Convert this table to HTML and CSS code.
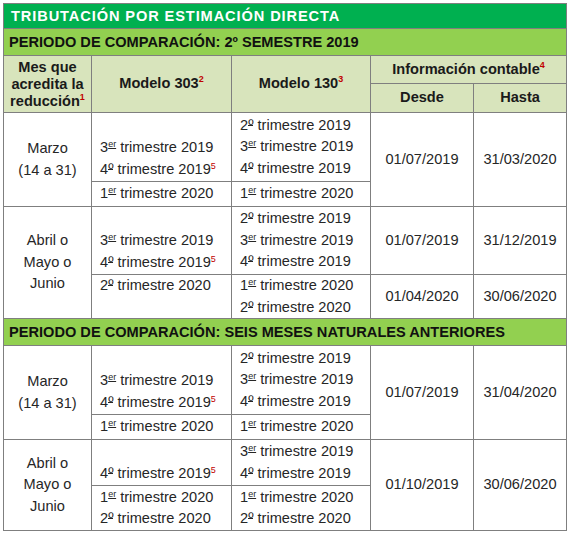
FILE: index.html
```html
<!DOCTYPE html>
<html lang="es">
<head>
<meta charset="utf-8">
<title>Tributación por estimación directa</title>
<link rel="stylesheet" href="styles.css">
</head>
<body>
<table class="tbl">
  <colgroup>
    <col class="c1"><col class="c2"><col class="c3"><col class="c4"><col class="c5">
  </colgroup>
  <tr class="r-title"><td colspan="5" class="title">TRIBUTACIÓN POR ESTIMACIÓN DIRECTA</td></tr>
  <tr class="r-sec"><td colspan="5" class="sec">PERIODO DE COMPARACIÓN: 2º SEMESTRE 2019</td></tr>
  <tr class="r-h1">
    <th rowspan="2" class="hd hmes">Mes que<br>acredita la<br>reducción<sup class="n">1</sup></th>
    <th rowspan="2" class="hd">Modelo 303<sup class="n">2</sup></th>
    <th rowspan="2" class="hd">Modelo 130<sup class="n">3</sup></th>
    <th colspan="2" class="hd">Información contable<sup class="n">4</sup></th>
  </tr>
  <tr class="r-h2"><th class="hd">Desde</th><th class="hd">Hasta</th></tr>

  <tr class="r69">
    <td rowspan="2" class="mes">Marzo<br>(14 a 31)</td>
    <td class="tx bot">3<span class="o">er</span> trimestre 2019<br>4<span class="om">º</span> trimestre 2019<sup class="f">5</sup></td>
    <td class="tx">2<span class="om">º</span> trimestre 2019<br>3<span class="o">er</span> trimestre 2019<br>4<span class="om">º</span> trimestre 2019</td>
    <td rowspan="2" class="dt">01/07/2019</td>
    <td rowspan="2" class="dt">31/03/2020</td>
  </tr>
  <tr class="r25">
    <td class="tx">1<span class="o">er</span> trimestre 2020</td>
    <td class="tx">1<span class="o">er</span> trimestre 2020</td>
  </tr>

  <tr class="r67">
    <td rowspan="2" class="mes">Abril o<br>Mayo o<br>Junio</td>
    <td class="tx bot">3<span class="o">er</span> trimestre 2019<br>4<span class="om">º</span> trimestre 2019<sup class="f">5</sup></td>
    <td class="tx">2<span class="om">º</span> trimestre 2019<br>3<span class="o">er</span> trimestre 2019<br>4<span class="om">º</span> trimestre 2019</td>
    <td class="dt">01/07/2019</td>
    <td class="dt">31/12/2019</td>
  </tr>
  <tr class="r44">
    <td class="tx top">2<span class="om">º</span> trimestre 2020</td>
    <td class="tx">1<span class="o">er</span> trimestre 2020<br>2<span class="om">º</span> trimestre 2020</td>
    <td class="dt">01/04/2020</td>
    <td class="dt">30/06/2020</td>
  </tr>

  <tr class="r-sec2"><td colspan="5" class="sec">PERIODO DE COMPARACIÓN: SEIS MESES NATURALES ANTERIORES</td></tr>

  <tr class="r69">
    <td rowspan="2" class="mes">Marzo<br>(14 a 31)</td>
    <td class="tx bot">3<span class="o">er</span> trimestre 2019<br>4<span class="om">º</span> trimestre 2019<sup class="f">5</sup></td>
    <td class="tx">2<span class="om">º</span> trimestre 2019<br>3<span class="o">er</span> trimestre 2019<br>4<span class="om">º</span> trimestre 2019</td>
    <td rowspan="2" class="dt">01/07/2019</td>
    <td rowspan="2" class="dt">31/04/2020</td>
  </tr>
  <tr class="r25">
    <td class="tx">1<span class="o">er</span> trimestre 2020</td>
    <td class="tx">1<span class="o">er</span> trimestre 2020</td>
  </tr>

  <tr class="r46">
    <td rowspan="2" class="mes">Abril o<br>Mayo o<br>Junio</td>
    <td class="tx bot">4<span class="om">º</span> trimestre 2019<sup class="f">5</sup></td>
    <td class="tx">3<span class="o">er</span> trimestre 2019<br>4<span class="om">º</span> trimestre 2019</td>
    <td rowspan="2" class="dt">01/10/2019</td>
    <td rowspan="2" class="dt">30/06/2020</td>
  </tr>
  <tr class="r46">
    <td class="tx">1<span class="o">er</span> trimestre 2020<br>2<span class="om">º</span> trimestre 2020</td>
    <td class="tx">1<span class="o">er</span> trimestre 2020<br>2<span class="om">º</span> trimestre 2020</td>
  </tr>
</table>
</body>
</html>
```

FILE: styles.css
```css
html, body {
  margin: 0;
  padding: 0;
  background: #ffffff;
}
body {
  padding: 3px 0 0 3px;
  font-family: "Liberation Sans", Arial, sans-serif;
  font-size: 14.6px;
  color: #262626;
}
.tbl {
  border-collapse: collapse;
  table-layout: fixed;
  width: 563px;
  font-size: 14.6px;
}
.c1 { width: 88px; }
.c2 { width: 140px; }
.c3 { width: 139px; }
.c4 { width: 103px; }
.c5 { width: 93px; }

.tbl td, .tbl th {
  border: 1px solid #7f7f7f;
  padding: 0 8px;
  line-height: 21.5px;
  vertical-align: middle;
}
.title {
  background: #00b050;
  color: #ffffff;
  font-weight: bold;
  height: 24px;
  letter-spacing: 0.9px;
  padding-left: 7px !important;
  line-height: 20px !important;
}
.sec {
  background: #92d050;
  color: #111111;
  font-weight: bold;
  padding-left: 5px !important;
  line-height: 20px !important;
}
.r-sec td { height: 26px; }
.r-sec2 td { height: 26px; }
.hd {
  background: #d8e4bc;
  color: #1a1a1a;
  font-weight: bold;
  text-align: center;
}
.hmes {
  line-height: 17px !important;
  padding: 2px 2px 1px !important;
}
.r-h1 th { height: 27px; }
.r-h2 th { height: 28px; }
.mes {
  text-align: center;
  padding: 0 2px !important;
}
.tx { text-align: left; }
.dt { text-align: center; padding: 0 4px !important; }
.bot { vertical-align: bottom !important; padding-bottom: 1px !important; }
.top { vertical-align: top !important; }
.r69 td { height: 67px; }
.r25 td { height: 24px; }
.r67 td { height: 66px; }
.r44 td { height: 43px; }
.r46 td { height: 44px; }

.o {
  font-size: 9px;
  vertical-align: 5px;
  line-height: 0;
  text-decoration: underline;
}
.om {
  background: linear-gradient(currentColor, currentColor) no-repeat;
  background-size: 100% 1px;
  background-position: 0 8px;
}
.n {
  color: #c00000;
  font-size: 9px;
  font-weight: bold;
  vertical-align: 6px;
  line-height: 0;
}
.f {
  color: #c00000;
  font-size: 9px;
  vertical-align: 5px;
  line-height: 0;
}
```
